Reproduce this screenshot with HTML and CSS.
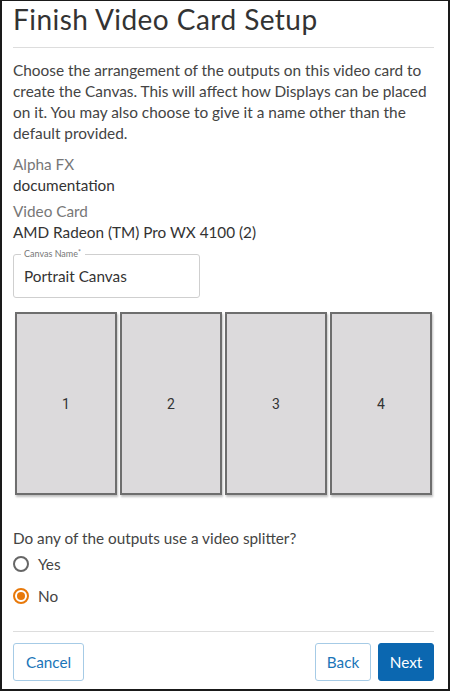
FILE: index.html
```html
<!DOCTYPE html>
<html lang="en">
<head>
    <meta charset="UTF-8">
    <meta name="viewport" content="width=device-width, initial-scale=1.0">
    <title>Finish Video Card Setup</title>
    <link rel="stylesheet" href="styles.css">
</head>
<body>
    <div class="modal">
        <h1 class="modal-title">Finish Video Card Setup</h1>

        <div class="modal-body">
            <p class="intro">Choose the arrangement of the outputs on this video card to create the Canvas. This will affect how Displays can be placed on it. You may also choose to give it a name other than the default provided.</p>

            <div class="info">
                <div class="info-label">Alpha FX</div>
                <div class="info-value">documentation</div>
            </div>
            <div class="info">
                <div class="info-label">Video Card</div>
                <div class="info-value">AMD Radeon (TM) Pro WX 4100 (2)</div>
            </div>

            <div class="field">
                <span class="field-label">Canvas Name<sup>*</sup></span>
                <div class="field-value">Portrait Canvas</div>
            </div>

            <div class="outputs">
                <div class="output">1</div>
                <div class="output">2</div>
                <div class="output">3</div>
                <div class="output">4</div>
            </div>

            <div class="question">Do any of the outputs use a video splitter?</div>
            <div class="radios">
                <label class="radio"><span class="radio-dot"></span>Yes</label>
                <label class="radio checked"><span class="radio-dot"></span>No</label>
            </div>
        </div>

        <div class="modal-footer">
            <button class="btn">Cancel</button>
            <div class="spacer"></div>
            <button class="btn btn-small">Back</button>
            <button class="btn btn-small btn-primary">Next</button>
        </div>
    </div>
</body>
</html>
```

FILE: styles.css
```css
* {
    box-sizing: border-box;
}
body {
    margin: 0;
    background: #fff;
    font-family: Lato, "Open Sans", sans-serif;
    color: #333;
}
.modal {
    width: 450px;
    height: 691px;
    border: 2px solid #1a1a1a;
    border-top-width: 1px;
    padding: 0 14px 0 11px;
    display: flex;
    flex-direction: column;
}
.modal-title {
    margin: 0;
    font-size: 28px;
    line-height: 36px;
    font-weight: 400;
    letter-spacing: 0.45px;
    color: #333;
    padding-bottom: 10px;
    border-bottom: 1px solid #dddddd;
}
.intro {
    margin: 12px 0 0;
    font-size: 15.4px;
    line-height: 21px;
    color: #444;
}
.info {
    margin-top: 10px;
    font-size: 15.3px;
    line-height: 20px;
}
.info + .info {
    margin-top: 6px;
}
.info-label {
    color: #777;
}
.info-value {
    color: #333;
    margin-top: 1px;
}
.field {
    position: relative;
    margin-top: 12px;
    width: 187px;
    height: 44px;
    border: 1px solid #cfcfcf;
    border-radius: 3px;
    padding: 11px 0 0 10px;
}
.field-label {
    position: absolute;
    top: -7px;
    left: 7px;
    padding: 0 4px 0 3px;
    background: #fff;
    font-size: 9px;
    line-height: 12px;
    color: #777;
}
.field-label sup {
    font-size: 7px;
    vertical-align: top;
    line-height: 8px;
}
.field-value {
    font-size: 15.3px;
    line-height: 20px;
    color: #333;
}
.outputs {
    margin: 14px 2px 0;
    height: 183px;
    display: grid;
    grid-template-columns: repeat(4, 1fr);
    gap: 3px;
}
.output {
    background: #dcdadc;
    border: 2px solid #6e6e6e;
    box-shadow: 1px 2px 2px rgba(0, 0, 0, 0.25);
    display: flex;
    align-items: center;
    justify-content: center;
    font-family: Roboto, sans-serif;
    font-size: 14px;
    color: #333;
}
.question {
    margin-top: 33px;
    font-size: 15.3px;
    line-height: 20px;
    color: #444;
}
.radios {
    margin-top: 5px;
    display: flex;
    flex-direction: column;
    gap: 10px;
}
.radio {
    display: flex;
    align-items: center;
    gap: 9px;
    height: 22px;
    font-size: 15.3px;
    color: #444;
}
.radio-dot {
    width: 16px;
    height: 16px;
    border: 2px solid #666;
    border-radius: 50%;
    position: relative;
}
.radio.checked .radio-dot {
    border-color: #e8790a;
}
.radio.checked .radio-dot::after {
    content: "";
    position: absolute;
    left: 2px;
    top: 2px;
    width: 8px;
    height: 8px;
    border-radius: 50%;
    background: #e8790a;
}
.modal-footer {
    margin-top: auto;
    border-top: 1px solid #dddddd;
    padding: 11px 0 8px;
    display: flex;
    gap: 7px;
}
.spacer {
    flex: 1;
}
.btn {
    height: 38px;
    padding: 0 12px;
    border: 1px solid #a6cbe6;
    border-radius: 3px;
    background: #fff;
    color: #1a75b8;
    font-family: Lato, "Open Sans", sans-serif;
    font-size: 15.3px;
}
.btn-small {
    width: 56px;
    padding: 0;
}
.btn-primary {
    background: #0b67b0;
    border-color: #0b67b0;
    color: #fff;
}
```
